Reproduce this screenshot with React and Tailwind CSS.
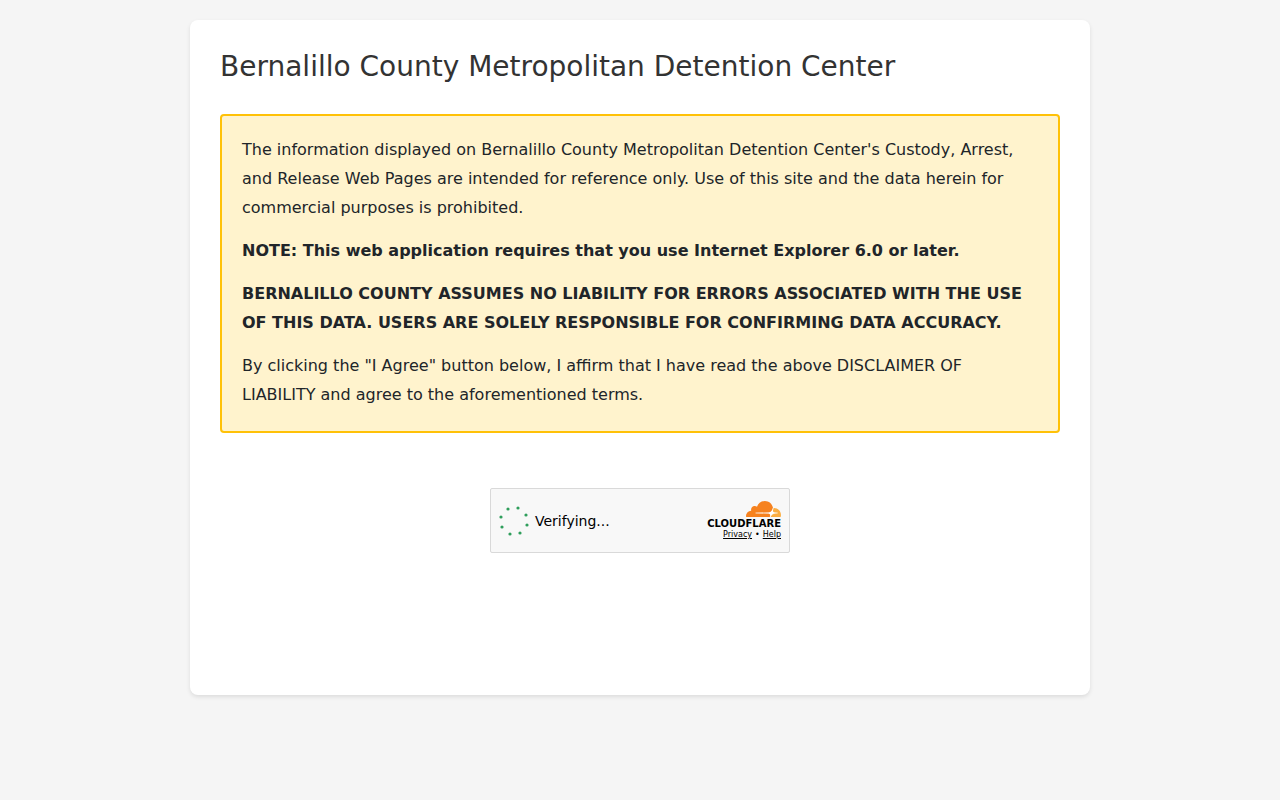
import React from "react";

const DOTS = [
  [11, 5],
  [21, 4],
  [29, 11],
  [30, 21],
  [23, 29],
  [13, 30],
  [5, 23],
  [4, 13],
];

function Spinner() {
  return (
    <svg className="size-[34px] shrink-0" viewBox="0 0 34 34" aria-hidden="true">
      {DOTS.map(([x, y]) => (
        <circle key={`${x}-${y}`} cx={x} cy={y} r="1.6" fill="#2f9e5b" />
      ))}
    </svg>
  );
}

function CloudMark() {
  return (
    <svg className="h-4 w-[35px]" viewBox="38 0 35 16" aria-hidden="true">
      <path
        fill="#fff"
        d="M69.2 10.2L66.3 9.1L64.9 7.4L63.5 10.4L47 11.1V12.8L61 12.8L62.6 15.6L65 13.2L71 12.6Z"
      />
      <path
        fill="#f6821f"
        d="M61.8848 15.7841L62.0632 15.1578C62.2758 14.4126 62.1967 13.7239 61.8401 13.2178C61.5118 12.7517 60.9649 12.4773 60.3007 12.4453L47.7201 12.2836C47.6811 12.2829 47.6428 12.2728 47.6083 12.2542C47.5738 12.2356 47.5442 12.209 47.5217 12.1766C47.4996 12.1431 47.4856 12.1049 47.4807 12.0649C47.4758 12.025 47.4801 11.9844 47.4933 11.9465C47.5149 11.8839 47.5541 11.8291 47.6061 11.7888C47.658 11.7486 47.7204 11.7247 47.7856 11.72L60.4827 11.5566C61.9889 11.4864 63.6196 10.2462 64.1905 8.73372L64.9146 6.81361C64.9443 6.73242 64.951 6.64444 64.9341 6.55957C64.112 2.80652 60.8115 0 56.8652 0C53.2293 0 50.1421 2.38158 49.0347 5.69186C48.2864 5.12186 47.3535 4.85982 46.4228 4.95823C44.6785 5.13401 43.276 6.55928 43.1034 8.32979C43.059 8.77189 43.0915 9.21845 43.1992 9.64918C40.3497 9.73347 38.0645 12.1027 38.0645 15.0151C38.0649 15.2751 38.0838 15.5347 38.1212 15.7919C38.1294 15.8513 38.1584 15.9057 38.2029 15.9452C38.2474 15.9847 38.3044 16.0067 38.3636 16.0071L61.5894 16.0099C61.6616 16.0088 61.7252 15.9862 61.7772 15.9455C61.8293 15.9049 61.8671 15.8483 61.8848 15.7841Z"
      />
      <path
        fill="#fbad41"
        d="M66.0758 6.95285C65.9592 6.95285 65.843 6.95582 65.7274 6.96177C65.7087 6.96312 65.6904 6.96719 65.6729 6.97385C65.6426 6.98437 65.6152 7.00219 65.5931 7.02579C65.5711 7.04939 65.5551 7.07806 65.5462 7.10936L65.0515 8.84333C64.8389 9.58847 64.918 10.2766 65.2749 10.7827C65.6029 11.2494 66.1498 11.5233 66.814 11.5552L69.4959 11.7186C69.5336 11.7199 69.5705 11.73 69.6037 11.7483C69.6369 11.7666 69.6654 11.7925 69.687 11.8239C69.7092 11.8576 69.7234 11.896 69.7283 11.9363C69.7332 11.9765 69.7288 12.0173 69.7153 12.0555C69.6937 12.118 69.6546 12.1727 69.6028 12.2129C69.5509 12.2531 69.4887 12.277 69.4236 12.2819L66.6371 12.4453C65.1241 12.5161 63.4937 13.7558 62.9233 15.2682L62.722 15.8022C62.7136 15.8245 62.7105 15.8486 62.713 15.8724C62.7155 15.8961 62.7236 15.9189 62.7365 15.9389C62.7495 15.9589 62.7669 15.9755 62.7874 15.9873C62.8079 15.9991 62.8309 16.0058 62.8544 16.0068H72.4502C72.506 16.0073 72.5604 15.9893 72.6051 15.9554C72.6498 15.9216 72.6823 15.8739 72.6977 15.8195C72.8677 15.2043 72.9535 14.5684 72.9529 13.9296C72.9517 10.0767 69.8732 6.95285 66.0758 6.95285Z"
      />
      <path
        fill="none"
        stroke="#fff"
        strokeWidth="0.6"
        strokeOpacity="0.6"
        d="M47.6 12H69.6M65.2 7.2L64.4 9.6Q63.4 11.4 61.4 12M66.6 12.2Q63.4 13 62.3 15.8"
      />
    </svg>
  );
}

function Challenge() {
  return (
    <section
      aria-label="Verification"
      className="flex h-[65px] w-full max-w-[300px] items-center justify-between rounded-xs border border-[#d9d9d9] bg-[#f8f8f8] pl-1.5 pr-2 text-black"
    >
      <div role="status" className="flex items-center gap-1">
        <Spinner />
        <span className="text-sm">Verifying...</span>
      </div>
      <div className="flex flex-col items-end">
        <CloudMark />
        <span className="mt-0.5 text-[10px] leading-[10px] font-bold">
          CLOUDFLARE
        </span>
        <div className="mt-px flex gap-[3px] text-[8px] leading-[10px]">
          <a href="#privacy" className="underline">
            Privacy
          </a>
          <span aria-hidden="true">•</span>
          <a href="#help" className="underline">
            Help
          </a>
        </div>
      </div>
    </section>
  );
}

export default function App() {
  return (
    <div className="min-h-screen bg-[#f5f5f5] p-5 font-['DejaVu_Sans',sans-serif] text-[#212529]">
      <main className="mx-auto max-w-[900px] rounded-lg bg-white px-[30px] pt-[30px] pb-[142px] shadow-[0_2px_4px_rgba(0,0,0,0.1)]">
        <h1 className="mb-[30px] text-[28px] leading-[34px] text-[#333]">
          Bernalillo County Metropolitan Detention Center
        </h1>
        <div className="flex flex-col gap-3.5 rounded border-2 border-[#ffc107] bg-[#fff3cd] px-5 pt-[19px] pb-[22px] text-base leading-[29px]">
          <p>
            The information displayed on Bernalillo County Metropolitan Detention Center's Custody,
            Arrest, and Release Web Pages are intended for reference only. Use of this site and the
            data herein for commercial purposes is prohibited.
          </p>
          <p className="font-bold">
            NOTE: This web application requires that you use Internet Explorer 6.0 or later.
          </p>
          <p className="font-bold">
            BERNALILLO COUNTY ASSUMES NO LIABILITY FOR ERRORS ASSOCIATED WITH THE USE OF THIS DATA.
            USERS ARE SOLELY RESPONSIBLE FOR CONFIRMING DATA ACCURACY.
          </p>
          <p>
            By clicking the "I Agree" button below, I affirm that I have read the above DISCLAIMER
            OF LIABILITY and agree to the aforementioned terms.
          </p>
        </div>
        <div className="mt-[55px] flex justify-center">
          <Challenge />
        </div>
      </main>
    </div>
  );
}
